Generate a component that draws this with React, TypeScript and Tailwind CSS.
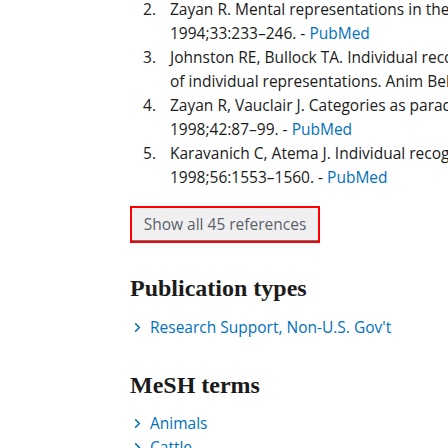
import { ChevronRight } from 'lucide-react';

const refs = [
  {
    n: 2,
    lines: ['Zayan R. Mental representations in the recognition of conspecific individuals. Behav', '1994;33:233–246.'],
    pubmed: true,
  },
  {
    n: 3,
    lines: ['Johnston RE, Bullock TA. Individual recognition by use of odours in golden hamsters: the nature', 'of individual representations. Anim Behav. 2001;61:545–557.'],
    pubmed: false,
  },
  {
    n: 4,
    lines: ['Zayan R, Vauclair J. Categories as paradigms for comparative cognition. Behav Processes.', '1998;42:87–99.'],
    pubmed: true,
  },
  {
    n: 5,
    lines: ['Karavanich C, Atema J. Individual recognition and memory in lobster dominance. Anim Behav.', '1998;56:1553–1560.'],
    pubmed: true,
  },
];

const pubTypes = ["Research Support, Non-U.S. Gov't"];
const meshTerms = ['Animals', 'Cattle'];

const serif = { fontFamily: '"Liberation Serif", serif' };

function TermList({ items }: { items: string[] }) {
  return (
    <ul className="flex flex-col">
      {items.map((t) => (
        <li key={t} className="flex h-6 items-center gap-[5px] text-[#0071bc]">
          <ChevronRight className="h-[15px] w-[15px]" strokeWidth={2.5} />
          <span className="whitespace-nowrap">{t}</span>
        </li>
      ))}
    </ul>
  );
}

export default function App() {
  return (
    <div
      className="h-[448px] w-[448px] overflow-hidden bg-white pl-[130px] text-[15.5px] leading-6 text-[#1b1b1b]"
      style={{ fontFamily: '"Open Sans", "Noto Sans", sans-serif' }}
    >
      <ol className="-mt-[3px] flex flex-col">
        {refs.map((r) => (
          <li key={r.n} className="flex">
            <span className="w-[40px] shrink-0 pl-[13px]">{r.n}.</span>
            <div className="flex flex-col whitespace-nowrap">
              <span>{r.lines[0]}</span>
              <span>
                {r.lines[1]}
                {r.pubmed && (
                  <>
                    {' - '}
                    <span className="text-[#0071bc]">PubMed</span>
                  </>
                )}
              </span>
            </div>
          </li>
        ))}
      </ol>

      <div className="mt-[17px] inline-block border-2 border-[#ff0000]">
        <button className="h-[33px] w-[186px] border-b border-[#71767a] bg-[#f0f0f0] text-[15.5px] text-[#5b616b]">
          Show all 45 references
        </button>
      </div>

      <h2 className="mt-[29px] text-[24px] leading-8 font-bold text-[#1b1b1b]" style={serif}>
        Publication types
      </h2>
      <div className="mt-[11px]">
        <TermList items={pubTypes} />
      </div>

      <h2 className="mt-[30px] text-[24px] leading-8 font-bold text-[#1b1b1b]" style={serif}>
        MeSH terms
      </h2>
      <div className="mt-[10px]">
        <TermList items={meshTerms} />
      </div>
    </div>
  );
}
